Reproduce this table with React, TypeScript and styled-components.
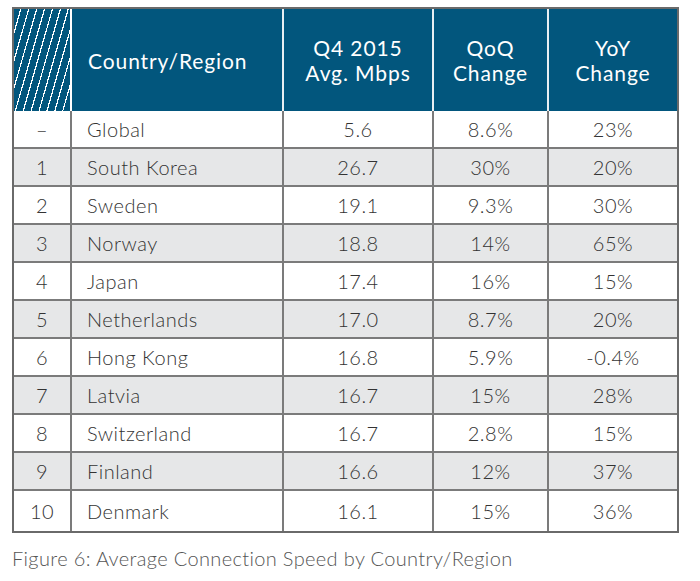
import React from "react";
import styled, { createGlobalStyle } from "styled-components";

const GlobalStyle = createGlobalStyle`
  html, body {
    margin: 0;
    padding: 0;
    background: #ffffff;
  }
  body {
    font-family: Lato, "Open Sans", sans-serif;
  }
`;

const Page = styled.div`
  padding: 7px 0 0 12px;
  width: 700px;
  box-sizing: border-box;
`;

const Table = styled.table`
  border-spacing: 0;
  border: 2px solid #6a6a6a;
  width: 667px;
  table-layout: fixed;
`;

const HatchCell = styled.th`
  width: 57px;
  height: 102px;
  padding: 0;
  border-right: 2px solid #ffffff;
  background-color: #02567d;
  background-image: repeating-linear-gradient(
    -74deg,
    #02567d 0px,
    #02567d 6.4px,
    #ffffff 6.4px,
    #ffffff 7.6px
  );
`;

const HeadCell = styled.th<{ $align?: "left" | "center"; $last?: boolean }>`
  height: 102px;
  padding: 0 0 0 ${(p) => (p.$align === "left" ? "16px" : "0")};
  background: #02567d;
  color: #ffffff;
  font-family: Lato, "Open Sans", sans-serif;
  font-weight: 400;
  font-size: 21px;
  line-height: 25px;
  letter-spacing: 0.9px;
  text-align: ${(p) => p.$align ?? "center"};
  vertical-align: middle;
  border-right: ${(p) => (p.$last ? "none" : "2px solid #e8eef2")};
`;

const Row = styled.tr<{ $shaded: boolean }>`
  background: ${(p) => (p.$shaded ? "#e6e7e8" : "#ffffff")};
`;

const Cell = styled.td<{ $align?: "left" | "center"; $last?: boolean; $bottom?: boolean; $tall?: boolean }>`
  height: ${(p) => (p.$tall ? "40px" : "36px")};
  padding: 0 0 0 ${(p) => (p.$align === "left" ? "15px" : "0")};
  color: #333333;
  font-family: Lato, "Open Sans", sans-serif;
  font-weight: 300;
  font-size: 20px;
  letter-spacing: 0.5px;
  text-align: ${(p) => p.$align ?? "center"};
  vertical-align: middle;
  border-right: ${(p) => (p.$last ? "none" : "2px solid #7b7b7b")};
  border-bottom: ${(p) => (p.$bottom ? "none" : "2px solid #7b7b7b")};
  white-space: nowrap;
`;

const Caption = styled.div`
  margin-top: 13px;
  color: #555555;
  font-family: Lato, "Open Sans", sans-serif;
  font-weight: 300;
  font-size: 20px;
  letter-spacing: 0.35px;
`;

type Entry = { rank: string; name: string; avg: string; qoq: string; yoy: string };

const data: Entry[] = [
  { rank: "–", name: "Global", avg: "5.6", qoq: "8.6%", yoy: "23%" },
  { rank: "1", name: "South Korea", avg: "26.7", qoq: "30%", yoy: "20%" },
  { rank: "2", name: "Sweden", avg: "19.1", qoq: "9.3%", yoy: "30%" },
  { rank: "3", name: "Norway", avg: "18.8", qoq: "14%", yoy: "65%" },
  { rank: "4", name: "Japan", avg: "17.4", qoq: "16%", yoy: "15%" },
  { rank: "5", name: "Netherlands", avg: "17.0", qoq: "8.7%", yoy: "20%" },
  { rank: "6", name: "Hong Kong", avg: "16.8", qoq: "5.9%", yoy: "-0.4%" },
  { rank: "7", name: "Latvia", avg: "16.7", qoq: "15%", yoy: "28%" },
  { rank: "8", name: "Switzerland", avg: "16.7", qoq: "2.8%", yoy: "15%" },
  { rank: "9", name: "Finland", avg: "16.6", qoq: "12%", yoy: "37%" },
  { rank: "10", name: "Denmark", avg: "16.1", qoq: "15%", yoy: "36%" },
];

export default function App() {
  return (
    <Page>
      <GlobalStyle />
      <Table>
        <colgroup>
          <col style={{ width: 58 }} />
          <col style={{ width: 212 }} />
          <col style={{ width: 150 }} />
          <col style={{ width: 115 }} />
          <col />
        </colgroup>
        <thead>
          <tr>
            <HatchCell />
            <HeadCell $align="left">Country/Region</HeadCell>
            <HeadCell>
              Q4 2015
              <br />
              Avg. Mbps
            </HeadCell>
            <HeadCell>
              QoQ
              <br />
              Change
            </HeadCell>
            <HeadCell $last>
              YoY
              <br />
              Change
            </HeadCell>
          </tr>
        </thead>
        <tbody>
          {data.map((d, i) => {
            const last = i === data.length - 1;
            return (
              <Row key={d.name} $shaded={i % 2 === 1}>
                <Cell $bottom={last} $tall={last}>{d.rank}</Cell>
                <Cell $align="left" $bottom={last} $tall={last}>{d.name}</Cell>
                <Cell $bottom={last} $tall={last}>{d.avg}</Cell>
                <Cell $bottom={last} $tall={last}>{d.qoq}</Cell>
                <Cell $last $bottom={last} $tall={last}>{d.yoy}</Cell>
              </Row>
            );
          })}
        </tbody>
      </Table>
      <Caption>Figure 6: Average Connection Speed by Country/Region</Caption>
    </Page>
  );
}
